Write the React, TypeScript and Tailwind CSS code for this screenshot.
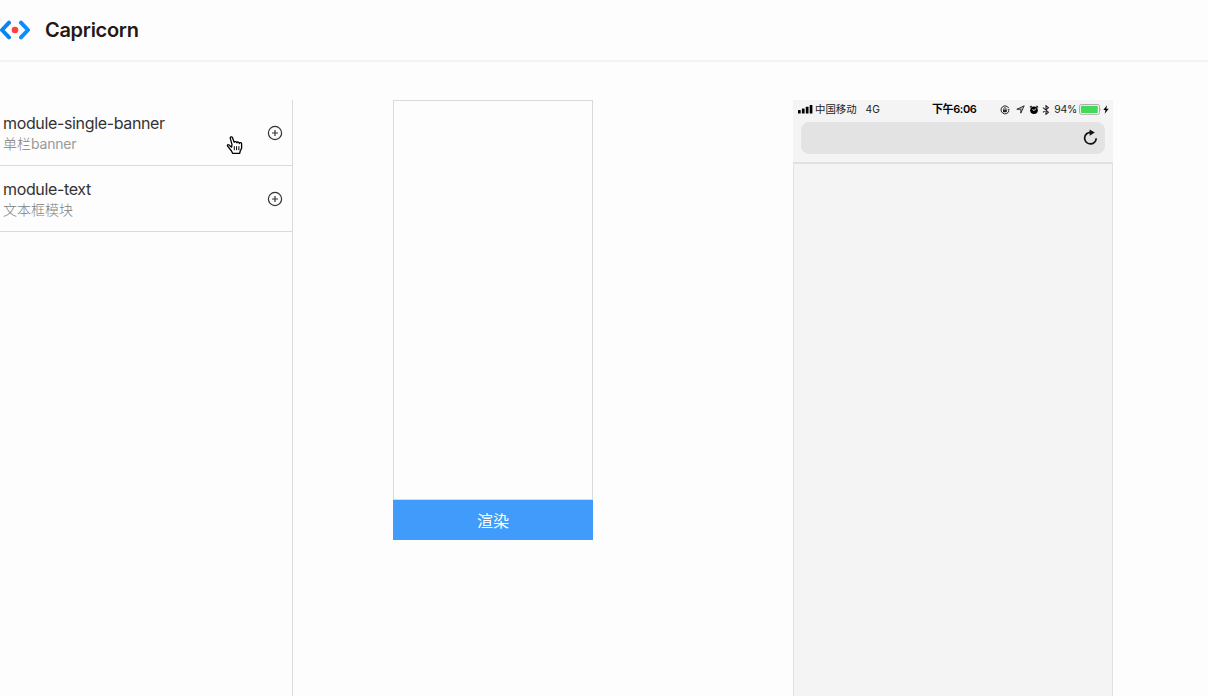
import React from "react";

const FONT = "font-[Inter,'Noto_Sans_CJK_SC',sans-serif]";

function Logo() {
  return (
    <svg width="31" height="20" viewBox="0 0 31 20" fill="none" className="-mr-px shrink-0">
      <path d="M9 2.6 L2 10 L9 17.4" stroke="#0a84ee" strokeWidth="4" strokeLinecap="round" strokeLinejoin="round" />
      <path d="M21 2.6 L28 10 L21 17.4" stroke="#0a8cff" strokeWidth="4" strokeLinecap="round" strokeLinejoin="round" />
      <circle cx="15" cy="10" r="3.3" fill="#fd4141" />
    </svg>
  );
}

function PlusCircle() {
  return (
    <svg width="16" height="16" viewBox="0 0 16 16" fill="none" stroke="#333" strokeWidth="1.2" className="shrink-0">
      <circle cx="8" cy="8" r="6.6" />
      <path d="M8 5v6M5 8h6" />
    </svg>
  );
}

function HandCursor() {
  return (
    <svg width="18" height="20" viewBox="0 0 18 20" className="absolute left-[226px] top-[35px]">
      <path
        d="M5.6 12.2 L3 9.9 C1.8 9 .9 10.2 1.6 11.2 L5.5 16 L6.6 18.3 H13.7 L14.2 16 L15.6 13.2 V8.6 C15.6 7.3 13.6 7.3 13.4 8.5 C13.4 6.8 11.2 6.5 10.9 7.8 C10.6 6.4 8.6 6.3 8.2 7.2 L6.4 2.6 C5.8 1.2 3.9 1.9 4.3 3.4 L6 9.6 Z"
        fill="#fff"
        stroke="#000"
        strokeWidth="1.3"
        strokeLinejoin="round"
      />
      <path d="M8.3 11.2v4M10.6 11.2v4M12.9 11.2v4" stroke="#000" strokeWidth="1" />
    </svg>
  );
}

function ModuleRow({ name, desc, children }: { name: string; desc: React.ReactNode; children?: React.ReactNode }) {
  return (
    <div className="relative flex h-[66px] items-center justify-between border-b border-[#dadada] pl-[3px] pr-[9px]">
      <div className="pt-px">
        <div className="text-[16px] leading-[22px] tracking-[-0.35px] text-[#333]">{name}</div>
        <div className="text-[14px] font-light leading-5 text-[#808080]">{desc}</div>
      </div>
      <PlusCircle />
      {children}
    </div>
  );
}

function StatusBar() {
  return (
    <div className="flex h-[19px] items-center text-[10px] leading-none text-[#222]">
      <div className="flex w-[139px] items-center pl-[5px]">
        <svg width="15" height="9" viewBox="0 0 15 9" fill="#000">
          <rect x="0" y="5" width="2.7" height="3.6" rx=".5" />
          <rect x="3.9" y="3.6" width="2.7" height="5" rx=".5" />
          <rect x="7.8" y="1.8" width="2.7" height="6.8" rx=".5" />
          <rect x="11.7" y="0" width="2.7" height="8.6" rx=".5" />
        </svg>
        <span className="ml-[2px] whitespace-nowrap pt-px text-[10.4px]">中国移动</span>
        <span className="ml-[9px] text-[10.2px]">4G</span>
      </div>
      <span className="whitespace-nowrap text-[11px] font-semibold tracking-[-0.4px] text-black">下午6:06</span>
      <div className="ml-auto flex items-center pr-[4px]">
        <svg width="10" height="10" viewBox="0 0 10 10" fill="none" stroke="#222">
          <path d="M8.7 3.2A4 4 0 1 0 8.9 6" />
          <path d="M7.4 4.2h2.4L8.7 6z" fill="#222" stroke="none" />
          <rect x="3" y="4.6" width="3.8" height="2.6" fill="#222" stroke="none" />
          <path d="M3.8 4.8V3.7a1.1 1.1 0 0 1 2.2 0v1.1" strokeWidth=".8" />
        </svg>
        <svg width="9" height="9" viewBox="0 0 9 9" fill="none" stroke="#222" className="ml-[6px]">
          <path d="M8.2.8L.8 4.3h4V8.2z" fill="#bbb" strokeWidth=".9" strokeLinejoin="round" />
        </svg>
        <svg width="10" height="10" viewBox="0 0 10 10" className="ml-[4px]">
          <circle cx="5" cy="5.2" r="3.8" />
          <path d="M.9 2.4L2.6 1M9.1 2.4L7.4 1" stroke="#000" strokeWidth="1.2" />
          <path d="M7 3.7L5 5.5 3.4 4.5" stroke="#fff" strokeWidth=".9" fill="none" />
        </svg>
        <svg width="8" height="10" viewBox="0 0 8 10" fill="none" stroke="#222" className="ml-[3px]">
          <path d="M1 2.7L6.4 7.2 4 9.3V.7l2.4 2.1L1 7.3" strokeWidth="1.1" />
        </svg>
        <span className="ml-1 pt-px text-[10.4px] tracking-[-0.2px]">94%</span>
        <svg width="23" height="11" viewBox="0 0 23 11" className="ml-[2px]">
          <rect x=".5" y=".5" width="20" height="9.8" rx="1.8" fill="#fff" stroke="#999" strokeWidth=".8" />
          <rect x="1.8" y="1.8" width="17" height="7.2" rx=".6" fill="#43d95b" />
          <path d="M21.6 3.9q1.2 1.5 0 3z" fill="#999" />
        </svg>
        <svg width="6" height="9" viewBox="0 0 6 9" className="ml-px">
          <path d="M4 .2L.3 5h2.2l-.8 3.8L5.8 3.8H3.3z" />
        </svg>
      </div>
    </div>
  );
}

function Phone() {
  return (
    <div className="flex w-[320px] flex-col bg-[#f4f4f4]">
      <div className="h-16 border-b-2 border-[#e1e1e1]">
        <StatusBar />
        <div className="mx-2 mt-[3px] flex h-8 items-center justify-end rounded-[8px] border border-[#e3e3e8] bg-[#e3e3e3] pr-[6px]">
          <svg width="16" height="18" viewBox="0 0 16 18" fill="none">
            <path d="M9 3.4A5.8 5.8 0 1 0 14.2 9.2" stroke="#111" strokeWidth="1.7" />
            <path d="M7.6 .4L12.8 3.5 7.6 6.8z" fill="#111" />
          </svg>
        </div>
      </div>
      <div className="flex-1 border-x border-[#e1e1e1]" />
    </div>
  );
}

export default function App() {
  return (
    <div className={`${FONT} flex h-screen flex-col overflow-hidden bg-[#fdfdfd]`}>
      <header className="flex h-[62px] shrink-0 items-center border-b-2 border-[#f3f3f3]">
        <Logo />
        <h1 className="ml-[15px] text-[20px] font-semibold leading-7 tracking-[-0.3px] text-[#231815]">Capricorn</h1>
      </header>
      <main className="flex flex-1 pt-[38px]">
        <aside className="w-[293px] border-r border-[#dadada]">
          <ModuleRow
            name="module-single-banner"
            desc={
              <>
                单栏<span className="font-normal tracking-[-0.2px] text-[#999]">banner</span>
              </>
            }
          >
            <HandCursor />
          </ModuleRow>
          <ModuleRow name="module-text" desc="文本框模块" />
        </aside>
        <section className="ml-[100px] w-[200px]">
          <div className="h-[400px] border border-[#dadada]" />
          <button className="block h-10 w-full bg-[#409bfa] pt-px text-[16px] text-white">渲染</button>
        </section>
        <div className="ml-[200px] flex">
          <Phone />
        </div>
      </main>
    </div>
  );
}
